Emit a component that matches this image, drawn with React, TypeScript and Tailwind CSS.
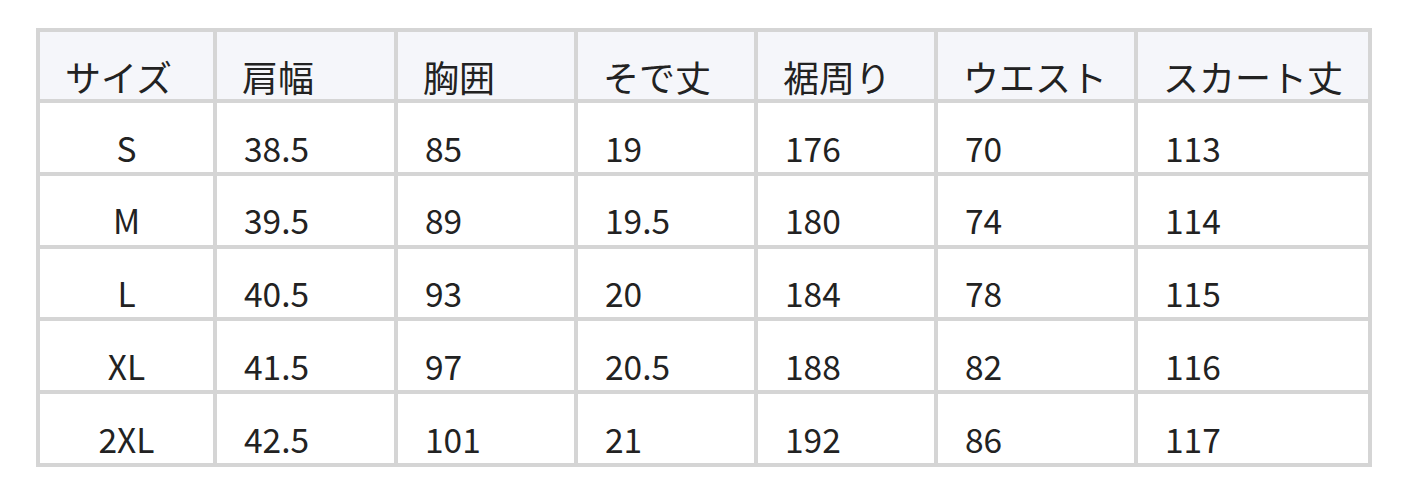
const headers = ["サイズ", "肩幅", "胸囲", "そで丈", "裾周り", "ウエスト", "スカート丈"];

const rows = [
  ["S", "38.5", "85", "19", "176", "70", "113"],
  ["M", "39.5", "89", "19.5", "180", "74", "114"],
  ["L", "40.5", "93", "20", "184", "78", "115"],
  ["XL", "41.5", "97", "20.5", "188", "82", "116"],
  ["2XL", "42.5", "101", "21", "192", "86", "117"],
];

export default function App() {
  return (
    <div
      className="w-[1408px] h-[495px] bg-white pt-[28px] pl-[36px] text-[#222]"
      style={{ fontFamily: '"Noto Sans CJK JP", "Noto Sans", sans-serif' }}
    >
      <div className="inline-grid grid-cols-[173px_177px_176px_176px_176px_196px_230px] gap-[4px] p-[4px] bg-[#d5d5d5]">
        {headers.map((h) => (
          <div
            key={h}
            className="h-[67px] bg-[#f5f6fa] flex items-center pt-[20px] pl-[25px] text-[36px] leading-none whitespace-nowrap"
          >
            {h}
          </div>
        ))}
        {rows.map((row) =>
          row.map((cell, i) => (
            <div
              key={row[0] + i}
              className={`h-[68.8px] bg-white flex items-center pt-[20px] text-[33.5px] leading-none ${
                i === 0 ? "justify-center" : "pl-[27px]"
              }`}
            >
              {cell}
            </div>
          ))
        )}
      </div>
    </div>
  );
}
